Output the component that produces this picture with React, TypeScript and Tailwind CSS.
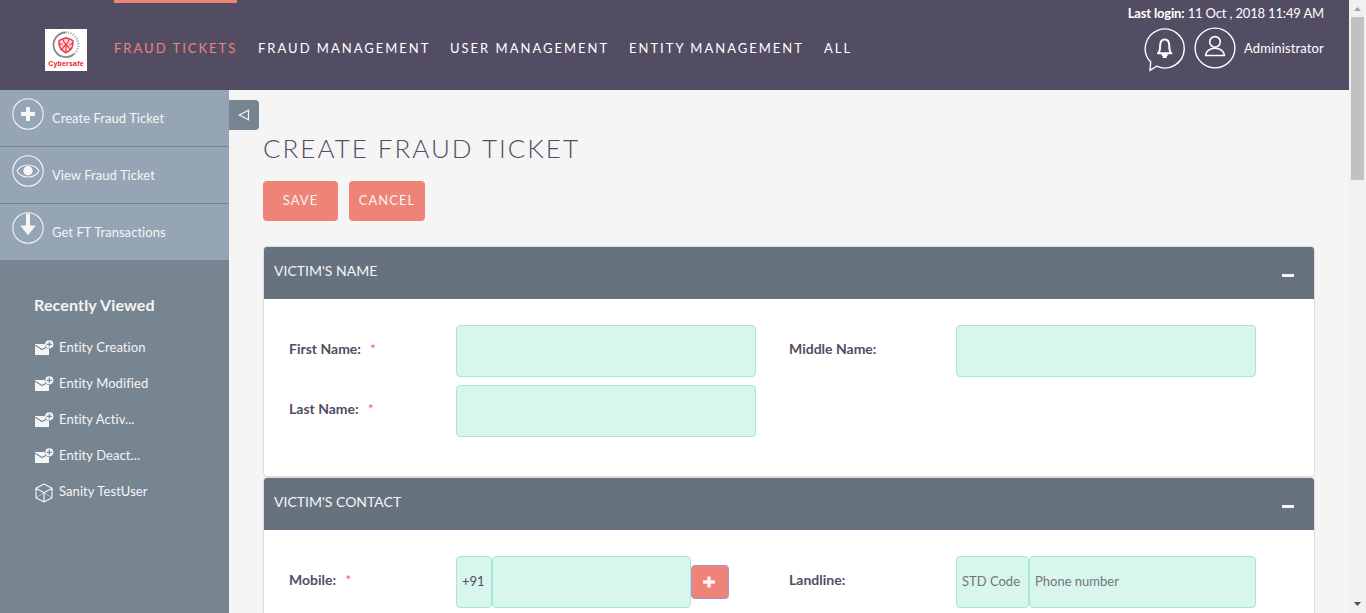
import type { ReactNode } from "react";

const navItems = [
  { label: "FRAUD TICKETS", active: true, width: "w-[123px]" },
  { label: "FRAUD MANAGEMENT", active: false, width: "w-[171px]" },
  { label: "USER MANAGEMENT", active: false, width: "w-[158px]" },
  { label: "ENTITY MANAGEMENT", active: false, width: "w-[174px]" },
  { label: "ALL", active: false, width: "w-[30px]" },
];

function Logo() {
  return (
    <div className="mt-[29px] flex h-[42px] w-[42px] flex-col items-center bg-white">
      <svg width="30" height="30" viewBox="0 0 30 30" fill="none" className="mt-[1px] shrink-0">
        <path d="M15.500 2.500A12.300 12.300 0 1 0 23 24" stroke="#8b8b8f" strokeWidth="1.800" />
        <path d="M17 2.600A12.300 12.300 0 0 1 22.500 24.500" stroke="#999" strokeWidth="2.200" strokeDasharray="1 1.600" />
        <path
          d="M15 7.800C12.500 9 10.500 8.500 8 10.800C7.500 16 9.500 20.500 15 22.800C20.500 20.500 22.500 16 22 10.800C19.500 8.500 17.500 9 15 7.800Z"
          fill="#fbd5d7"
          stroke="#ee3a43"
          strokeWidth="1.500"
        />
        <path d="M15 14V22M11.500 9L13 12L15 14.500L17 12L18.500 9M11 19.500L13 16.500L15 14.500L17 16.500L19 19.500M8 13L11.500 15M22 13L18.500 15" stroke="#ee3a43" strokeWidth="1.200" />
      </svg>
      <span className="-mt-[1px] text-center font-['Liberation_Sans',sans-serif] text-[7px] leading-[9px] font-bold tracking-[0.200px] text-[#f0161e]">
        Cybersafe
      </span>
    </div>
  );
}

function BellBubble() {
  return (
    <svg width="42" height="46" viewBox="0 0 42 46" fill="none">
      <path
        d="M6.700 35A19.500 19.500 0 1 1 12.600 39.200L6 43.300Z"
        stroke="#fff"
        strokeWidth="1.400"
        strokeLinejoin="miter"
      />
      <path
        d="M13.900 26.300C16.400 24.600 16 21 16.100 18.500C16.200 14.500 18 12.400 20.700 12.400C23.400 12.400 25.200 14.500 25.300 18.500C25.400 21 25 24.600 27.500 26.300Z"
        stroke="#fff"
        strokeWidth="2"
        strokeLinejoin="round"
      />
      <path d="M17.800 27H23.600V29H22.700V31H18.700V29H17.800Z" fill="#fff" />
    </svg>
  );
}

function UserCircle() {
  return (
    <svg width="42" height="42" viewBox="0 0 42 42" fill="none">
      <circle cx="21" cy="21" r="19.900" stroke="#fff" strokeWidth="1.400" />
      <circle cx="21" cy="14.900" r="5.300" stroke="#fff" strokeWidth="1.600" />
      <path d="M11.500 28.500C12.500 23.500 16.500 21.300 21 21.300S29.500 23.500 30.500 28.500Z" stroke="#fff" strokeWidth="1.600" strokeLinejoin="round" />
    </svg>
  );
}

function Header() {
  return (
    <header className="flex h-[90px] shrink-0 bg-[#534d64] pl-[45px] text-white">
      <Logo />
      <nav className="ml-[27px] flex gap-[21px]">
        {navItems.map((item) => (
          <div
            key={item.label}
            className={`${item.width} border-t-[3px] pt-[35px] text-[13px] leading-[20px] tracking-[2px] whitespace-nowrap ${
              item.active ? "border-[#f08377] text-[#f08377]" : "border-transparent"
            }`}
          >
            {item.label}
          </div>
        ))}
      </nav>
      <div className="ml-auto flex flex-col items-end pt-[4px] pr-[25px]">
        <div className="text-[13px] leading-[18px] tracking-[-0.160px] whitespace-nowrap">
          <b>Last login:</b> 11 Oct , 2018 11:49 AM
        </div>
        <div className="mt-[4px] flex">
          <div className="pt-[1px]">
            <BellBubble />
          </div>
          <div className="ml-[8px] pt-[1px]">
            <UserCircle />
          </div>
          <span className="mt-[12px] ml-[8px] text-[13px] leading-[20px] tracking-[0.150px]">Administrator</span>
        </div>
      </div>
    </header>
  );
}

function CircleIcon({ children }: { children: ReactNode }) {
  return (
    <svg width="32" height="32" viewBox="0 0 32 32" fill="none">
      <circle cx="16" cy="16" r="15.200" stroke="#f5f5f5" strokeWidth="1.100" />
      {children}
    </svg>
  );
}

const actions = [
  {
    label: "Create Fraud Ticket",
    icon: <path d="M16 9V23M9 16H23" stroke="#f5f5f5" strokeWidth="4" />,
  },
  {
    label: "View Fraud Ticket",
    icon: (
      <>
        <path d="M5 16C9.500 8 22.500 8 27 16C22.500 24 9.500 24 5 16Z" stroke="#f5f5f5" strokeWidth="1.100" />
        <circle cx="16" cy="15.700" r="4.700" fill="#f5f5f5" />
      </>
    ),
  },
  {
    label: "Get FT Transactions",
    icon: <path d="M14 1.500H18V13.500H23.800L16 23.300L8.200 13.500H14Z" fill="#f5f5f5" />,
  },
];

function EnvelopeIcon() {
  return (
    <svg width="19" height="16" viewBox="0 0 19 16" fill="none">
      <path d="M0 4H9.800A4.900 4.900 0 0 0 14 9V15H0Z" fill="#f5f5f5" />
      <path d="M0 5.200L7 9.500L11 7.500" stroke="#778591" strokeWidth="1.100" />
      <circle cx="14.300" cy="4.300" r="4.100" fill="#f5f5f5" />
      <path d="M14.300 1.800V6.800M11.800 4.300H16.800" stroke="#778591" strokeWidth="1.200" />
    </svg>
  );
}

function CubeIcon() {
  return (
    <svg width="19" height="20" viewBox="0 0 19 20" fill="none" stroke="#f5f5f5">
      <path d="M9 1L17 5.300V14.700L9 19L1 14.700V5.300ZM1 5.300L9 9.800L17 5.300M9 9.800V19" strokeWidth="1.200" strokeLinejoin="round" />
      <path d="M1 14.700L9 9.800L17 14.700" strokeWidth="0.500" />
    </svg>
  );
}

const recent = ["Entity Creation", "Entity Modified", "Entity Activ...", "Entity Deact..."];

function Sidebar() {
  return (
    <aside className="w-[229px] shrink-0 bg-[#778591] text-[#f5f5f5]">
      <div className="flex flex-col gap-px">
        {actions.map((a) => (
          <div key={a.label} className="flex h-[56px] bg-[#95a5b5] pl-[12px]">
            <div className="pt-[8px]">
              <CircleIcon>{a.icon}</CircleIcon>
            </div>
            <span className="ml-[8px] pt-[18px] text-[13px] leading-[20px] tracking-[0.050px]">{a.label}</span>
          </div>
        ))}
      </div>
      <h2 className="mt-[34px] ml-[34px] text-[16px] leading-[22px] font-bold tracking-[0.150px]">Recently Viewed</h2>
      <ul className="mt-[21px] ml-[35px] text-[13px] leading-[20px] tracking-[0.080px]">
        {recent.map((r) => (
          <li key={r} className="flex h-[36px]">
            <span className="pt-[3px]">
              <EnvelopeIcon />
            </span>
            <span className="ml-[5px]">{r}</span>
          </li>
        ))}
        <li className="flex h-[36px]">
          <span className="pt-[2px]">
            <CubeIcon />
          </span>
          <span className="ml-[5px]">Sanity TestUser</span>
        </li>
      </ul>
    </aside>
  );
}

function Panel({ title, height, children }: { title: string; height: string; children: ReactNode }) {
  return (
    <section className={`w-[1052px] shrink-0 overflow-hidden rounded-[4px] border border-[#dddddd] bg-white ${height}`}>
      <div className="flex h-[52px] justify-between bg-[#66727d] pr-[20px] pl-[10px] text-[#f5f5f5]">
        <span className="mt-[14px] text-[14px] leading-[20px]">{title}</span>
        <span className="mt-[27px] h-[3px] w-[12px] bg-[#f5f5f5]" />
      </div>
      <div className="pt-[26px] pl-[25px]">{children}</div>
    </section>
  );
}

function Field({ label, required, children }: { label: string; required?: boolean; children?: ReactNode }) {
  return (
    <div className="flex h-[60px] w-[500px]">
      <div className="w-[167px] pt-[14px] text-[14px] leading-[20px] font-bold text-[#534d64]">
        {label}
        {required && <span className="ml-[9px] font-normal text-[#f0645c]">*</span>}
      </div>
      {children}
    </div>
  );
}

const inputBox =
  "h-[52px] rounded-[4px] border border-[#a5e8d6] bg-[#d8f5ee] pb-[2px] text-[13px] text-[#534d64] outline-none";

export default function App() {
  return (
    <div className="flex h-[613px] w-[1366px] overflow-hidden bg-[#f5f5f5] font-[Lato,sans-serif]">
      <div className="flex w-[1349px] shrink-0 flex-col">
        <Header />
        <div className="flex min-h-0 flex-1">
          <Sidebar />
          <button className="mt-[10px] flex h-[30px] w-[30px] shrink-0 items-center justify-center rounded-r-[4px] bg-[#778591]">
            <svg width="12" height="12" viewBox="0 0 12 12" fill="none">
              <path d="M10.500 1.300V10.700L1.300 6Z" stroke="#f5f5f5" strokeWidth="1.200" />
            </svg>
          </button>
          <main className="flex min-h-0 flex-col pl-[4px]">
            <h1 className="mt-[41px] h-[35px] text-[26px] leading-[34px] font-light tracking-[2px] whitespace-nowrap text-[#534d64]">
              CREATE FRAUD TICKET
            </h1>
            <div className="mt-[16px] flex h-[40px] shrink-0 gap-[11px] text-[13px] tracking-[1px] text-[#f5f5f5]">
              <button className="w-[75px] rounded-[4px] bg-[#f08377]">SAVE</button>
              <button className="w-[76px] rounded-[4px] bg-[#f08377]">CANCEL</button>
            </div>
            <div className="mt-[25px] flex flex-col">
              <Panel title="VICTIM'S NAME" height="h-[231px]">
                <div className="grid grid-cols-[500px_500px]">
                  <Field label="First Name:" required>
                    <input className={`${inputBox} w-[300px]`} />
                  </Field>
                  <Field label="Middle Name:">
                    <input className={`${inputBox} w-[300px]`} />
                  </Field>
                  <Field label="Last Name:" required>
                    <input className={`${inputBox} w-[300px]`} />
                  </Field>
                </div>
              </Panel>
              <Panel title="VICTIM'S CONTACT" height="h-[231px]">
                <div className="grid grid-cols-[500px_500px]">
                  <Field label="Mobile:" required>
                    <input className={`${inputBox} w-[36px] pl-[5px]`} defaultValue="+91" />
                    <input className={`${inputBox} w-[199px]`} />
                    <button className="mt-[9px] flex h-[34px] w-[38px] items-center justify-center rounded-[4px] border border-[#a595c8] bg-[#f08377] pr-[2px]">
                      <svg width="12" height="12" viewBox="0 0 12 12">
                        <path d="M6 0.500V11.500M0 6H12" stroke="#f5f5f5" strokeWidth="3.400" />
                      </svg>
                    </button>
                  </Field>
                  <Field label="Landline:">
                    <input className={`${inputBox} w-[73px] pl-[5px] placeholder:text-[#757575]`} placeholder="STD Code" />
                    <input className={`${inputBox} w-[227px] pl-[5px] placeholder:text-[#757575]`} placeholder="Phone number" />
                  </Field>
                </div>
              </Panel>
            </div>
          </main>
        </div>
      </div>
      <div className="flex w-[17px] flex-col items-center bg-[#f1f1f1]">
        <svg width="17" height="17" viewBox="0 0 17 17" className="shrink-0">
          <path d="M5 11L8.500 7L12 11Z" fill="#a3a3a3" />
        </svg>
        <div className="h-[163px] w-[13px] bg-[#c1c1c1]" />
        <svg width="17" height="17" viewBox="0 0 17 17" className="mt-auto shrink-0">
          <path d="M5 6L8.500 10L12 6Z" fill="#505050" />
        </svg>
      </div>
    </div>
  );
}
